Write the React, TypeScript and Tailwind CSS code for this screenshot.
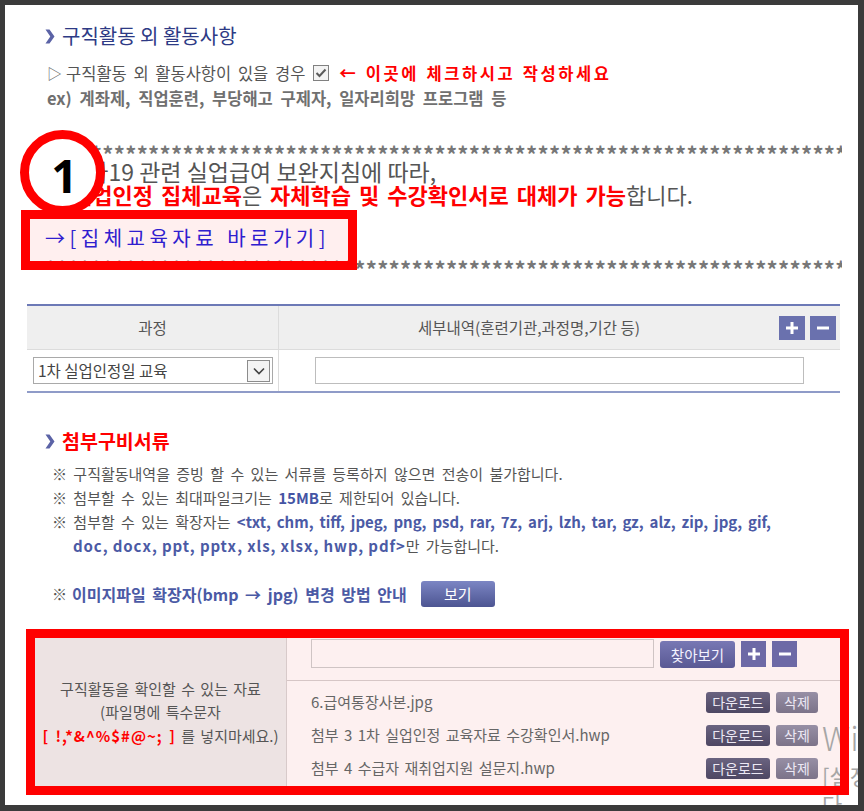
import React from "react";

function Chevron({ color = "#5b63a6" }: { color?: string }) {
  return (
    <svg width="10" height="15" viewBox="0 0 10 15" className="shrink-0">
      <path d="M0.5 0.5 L4.5 0.5 L9.5 7.5 L4.5 14.5 L0.5 14.5 L5.3 7.5 Z" fill={color} />
    </svg>
  );
}

function CheckBox() {
  return (
    <svg width="16" height="16" viewBox="0 0 16 16" className="shrink-0">
      <rect x="0.5" y="0.5" width="15" height="15" fill="#f3f3f3" stroke="#808080" />
      <path d="M3.5 8 L6.5 11 L12.5 4.5" fill="none" stroke="#5a5a5a" strokeWidth="2" />
    </svg>
  );
}

function DownArrow() {
  return (
    <svg width="12" height="8" viewBox="0 0 12 8">
      <path d="M1 1.5 L6 6.5 L11 1.5" fill="none" stroke="#444" strokeWidth="1.6" />
    </svg>
  );
}

function PlusMinus({ sign }: { sign: "+" | "-" }) {
  return (
    <div className="w-[26px] h-[24px] bg-[#6a71ae] flex items-center justify-center">
      <svg width="14" height="14" viewBox="0 0 14 14">
        {sign === "+" ? (
          <path d="M7 1 V13 M1 7 H13" stroke="#fff" strokeWidth="3" />
        ) : (
          <path d="M1 7 H13" stroke="#fff" strokeWidth="3" />
        )}
      </svg>
    </div>
  );
}

function PlusMinusSmall({ sign }: { sign: "+" | "-" }) {
  return (
    <div className="w-[25px] h-[26px] bg-[#6d69a6] flex items-center justify-center">
      <svg width="14" height="14" viewBox="0 0 14 14">
        {sign === "+" ? (
          <path d="M7 1 V13 M1 7 H13" stroke="#fff" strokeWidth="3" />
        ) : (
          <path d="M1 7 H13" stroke="#fff" strokeWidth="3" />
        )}
      </svg>
    </div>
  );
}

const stars = "*".repeat(90);

const files = [
  "6.급여통장사본.jpg",
  "첨부 3 1차 실업인정 교육자료 수강확인서.hwp",
  "첨부 4 수급자 재취업지원 설문지.hwp",
];

export default function App() {
  return (
    <div className="w-[864px] h-[811px] bg-[#3b3b3b] pt-[5px] pl-[5px] pr-[6px] pb-[6px] font-['Noto_Sans_CJK_KR',sans-serif]">
      <div className="relative h-full bg-white overflow-hidden">
        {/* Windows watermark (above page content, below annotations) */}
        <div className="absolute z-20 left-[817px] top-[716px] text-[#a6a6a6] whitespace-nowrap leading-none pointer-events-none">
          <div className="text-[33px] font-light">Windows 정품 인증</div>
          <div className="text-[22px] mt-[10px]">[설정]으로 이동하여 Windows를</div>
          <div className="text-[22px] mt-[6px]">다</div>
        </div>

        {/* Section: 구직활동 외 활동사항 */}
        <div className="mt-[19px] ml-[40px] h-[24px] flex items-center gap-[7px]">
          <Chevron />
          <span className="text-[20px] text-[#2d3a85] leading-[24px]">구직활동 외 활동사항</span>
        </div>
        <div className="mt-[15px] ml-[42px] h-[20px] flex items-center text-[16.5px] leading-[20px] text-[#555] [word-spacing:3px] whitespace-nowrap">
          <span className="text-[15px] text-[#666] mr-[4px]">▷</span>
          <span>구직활동 외 활동사항이 있을 경우</span>
          <span className="ml-[8px] mr-[10px]">
            <CheckBox />
          </span>
          <span className="font-bold text-[#ff0000] tracking-[2.6px] [word-spacing:1px]">← 이곳에 체크하시고 작성하세요</span>
        </div>
        <div className="mt-[5px] ml-[42px] h-[20px] text-[16.5px] leading-[20px] font-bold text-[#707070] [word-spacing:4px] whitespace-nowrap">
          ex) 계좌제, 직업훈련, 부당해고 구제자, 일자리희망 프로그램 등
        </div>

        {/* COVID notice */}
        <div className="relative mt-[35px]">
          <div className="ml-[40px] w-[797px] h-[20px] leading-[20px] overflow-hidden whitespace-nowrap text-[22px] font-bold text-[#777] tracking-[0.3px]">
            {stars}
          </div>
          <div className="ml-[40px] mt-[-3px] text-[23px] leading-[23px] text-[#555] whitespace-nowrap">
            코로나19 관련 실업급여 보완지침에 따라,
          </div>
          <div className="ml-[67px] text-[22px] leading-[23px] text-[#555] whitespace-nowrap [word-spacing:3px]">
            <span className="font-bold text-[#ff0000]">실업인정 집체교육</span>은{" "}
            <span className="font-bold text-[#ff0000]">자체학습 및 수강확인서로 대체가 가능</span>합니다.
          </div>
          <div className="ml-[40px] mt-[20px] h-[24px] leading-[24px] text-[20px] text-[#2222dd] tracking-[4.5px] whitespace-nowrap">
            →[집체교육자료 바로가기]
          </div>
          <div className="ml-[40px] mt-[8px] w-[797px] h-[20px] leading-[20px] overflow-hidden whitespace-nowrap text-[22px] font-bold text-[#777] tracking-[0.3px]">
            {stars}
          </div>

          {/* annotation: red box */}
          <div className="absolute left-[16px] top-[67px] w-[336px] h-[60px] border-[9px] border-[#ff0000] bg-[#ff000010]" />
          {/* annotation: circled 1 */}
          <div className="absolute left-[15px] top-[-13px] w-[85px] h-[85px] rounded-full border-[9px] border-[#ff0000] bg-white flex items-center justify-center">
            <span className="text-[46px] font-bold text-black leading-none mt-[4px] ml-[4px] font-['Noto_Sans',sans-serif]">1</span>
          </div>
        </div>

        {/* Table */}
        <div className="mt-[26px] ml-[22px] w-[813px] border-t-[2px] border-[#6c79b6] border-b-[2px] border-b-[#8f9bc8]">
          <div className="grid grid-cols-[252px_1fr] h-[44px] bg-[#efefef] border-b border-[#dcdcdc] text-[15.5px] text-[#555]">
            <div className="flex items-center justify-center border-r border-[#dcdcdc]">과정</div>
            <div className="flex items-center pr-[4px]">
              <div className="flex-1 text-center">세부내역(훈련기관,과정명,기간 등)</div>
              <div className="flex gap-[5px]">
                <PlusMinus sign="+" />
                <PlusMinus sign="-" />
              </div>
            </div>
          </div>
          <div className="grid grid-cols-[252px_1fr] h-[41px]">
            <div className="flex items-center pl-[6px] border-r border-[#dcdcdc]">
              <div className="w-[240px] h-[27px] border border-[#a9a9a9] flex items-center justify-between pl-[4px] pr-[2px] text-[15.5px] text-[#444]">
                <span>1차 실업인정일 교육</span>
                <div className="w-[23px] h-[22px] border border-[#8c8c8c] bg-[#f4f4f4] flex items-center justify-center">
                  <DownArrow />
                </div>
              </div>
            </div>
            <div className="flex items-center pl-[36px]">
              <div className="w-[489px] h-[27px] border border-[#bdbdbd] bg-white" />
            </div>
          </div>
        </div>

        {/* 첨부구비서류 */}
        <div className="mt-[36px] ml-[40px] h-[24px] flex items-center gap-[7px]">
          <Chevron />
          <span className="text-[19.5px] font-bold text-[#ff0000] leading-[24px]">첨부구비서류</span>
        </div>
        <div className="mt-[9px] ml-[47px] text-[15px] leading-[24px] text-[#555] [word-spacing:3px] whitespace-nowrap">
          <div>※ 구직활동내역을 증빙 할 수 있는 서류를 등록하지 않으면 전송이 불가합니다.</div>
          <div>
            ※ 첨부할 수 있는 최대파일크기는 <span className="text-[#4454a4] font-bold">15MB</span>로 제한되어 있습니다.
          </div>
          <div>
            ※ 첨부할 수 있는 확장자는{" "}
            <span className="text-[#4b5aa5] font-bold text-[15px] [word-spacing:2.5px]">
              &lt;txt, chm, tiff, jpeg, png, psd, rar, 7z, arj, lzh, tar, gz, alz, zip, jpg, gif,
            </span>
          </div>
          <div className="pl-[21px]">
            <span className="text-[#4b5aa5] font-bold text-[15px] tracking-[0.9px] [word-spacing:0px]">doc, docx, ppt, pptx, xls, xlsx, hwp, pdf&gt;</span>
            만 가능합니다.
          </div>
        </div>
        <div className="mt-[23px] ml-[47px] h-[26px] flex items-center text-[15px] whitespace-nowrap">
          <span className="text-[#555] mr-[5px]">※</span>
          <span className="font-bold text-[#4b5aa5] text-[16px] [word-spacing:3px]">이미지파일 확장자(bmp → jpg) 변경 방법 안내</span>
          <button className="ml-[14px] w-[74px] h-[26px] rounded-[3px] bg-gradient-to-b from-[#7c86c4] to-[#4d5592] text-white text-[15px]">
            보기
          </button>
        </div>

        {/* Attachments table (red annotation frame overlaid) */}
        <div className="relative mt-[22px] ml-[21px] w-[823px] h-[166px] p-[9px]">
          <div className="relative z-10 h-full grid grid-cols-[252px_1fr]">
            <div className="bg-[#ede3e3] border-r border-[#d8caca] flex flex-col items-center justify-center text-[15px] leading-[23.5px] text-[#555] [word-spacing:2px] whitespace-nowrap">
              <div>구직활동을 확인할 수 있는 자료</div>
              <div>(파일명에 특수문자</div>
              <div>
                <span className="font-bold text-[#ff0000] tracking-[1px]">[ !,*&amp;^%$#@~; ]</span> 를 넣지마세요.)
              </div>
            </div>
            <div className="bg-[#fdf0f0] flex flex-col">
              <div className="h-[43px] border-b border-[#d6c6c6] pl-[24px] pt-[1px] flex items-start gap-[6px]">
                <div className="w-[343px] h-[29px] border border-[#cfc4c4] bg-[#fdf0f0]" />
                <button className="mt-[2px] w-[75px] h-[27px] rounded-[3px] bg-gradient-to-b from-[#7878b4] to-[#5a5994] text-[#f4f2ff] text-[14.5px]">
                  찾아보기
                </button>
                <div className="mt-[2px] flex gap-[6px]">
                  <PlusMinusSmall sign="+" />
                  <PlusMinusSmall sign="-" />
                </div>
              </div>
              <div className="pt-[5px] pl-[24px] pr-[22px] text-[15px] text-[#666]">
                {files.map((f) => (
                  <div key={f} className="h-[33px] flex items-center justify-between">
                    <span className="[word-spacing:2px] whitespace-nowrap">{f}</span>
                    <div className="flex gap-[6px]">
                      <button className="w-[64px] h-[21px] rounded-[3px] bg-gradient-to-b from-[#6a6380] to-[#4e4763] text-[#ece8f4] text-[14px] leading-[21px]">
                        다운로드
                      </button>
                      <button className="w-[42px] h-[21px] rounded-[3px] bg-gradient-to-b from-[#978fa5] to-[#7c7389] text-[#ece8f4] text-[14px] leading-[21px]">
                        삭제
                      </button>
                    </div>
                  </div>
                ))}
              </div>
            </div>
          </div>
          {/* annotation: red frame */}
          <div className="absolute inset-0 z-30 border-[9px] border-[#ff0000] pointer-events-none" />
        </div>
      </div>
    </div>
  );
}
